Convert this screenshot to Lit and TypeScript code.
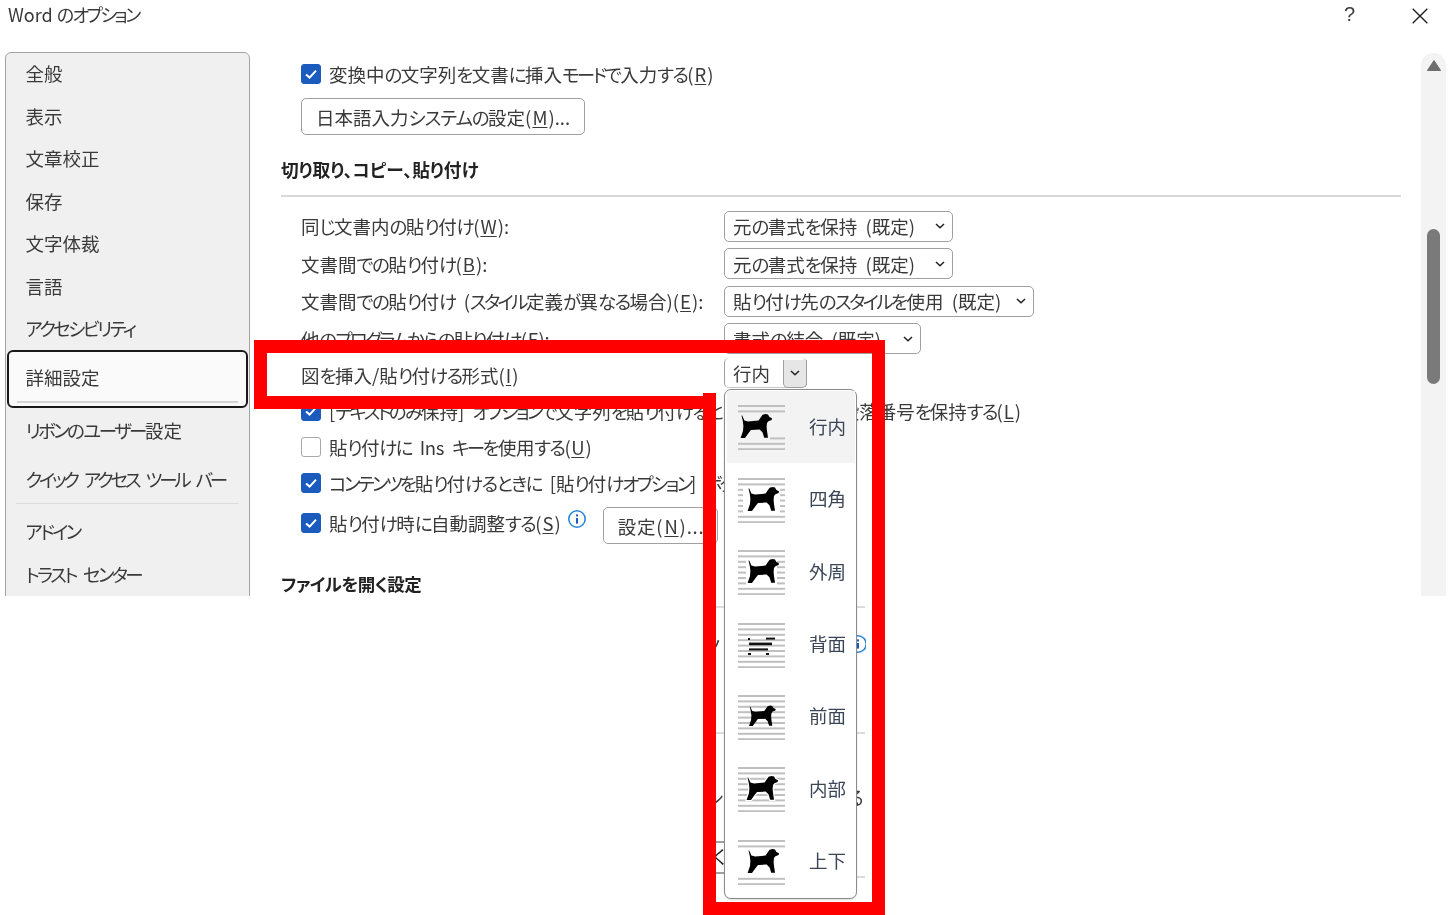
import { LitElement, html, css, svg } from "lit";
import { customElement } from "lit/decorators.js";

const DOG = "M1.5 1.5 L2.2 1.5 L4.4 6.5 L8 7.4 L18.6 6.6 L20.6 3.4 L22.6 .8 L25.5 0 L28 .6 L29.4 3 L32 4.2 L31.6 6 L28.4 7.2 L27 9 L26.6 13 L27 17 L28 23.8 L24.2 23.8 L22.6 18.4 L19.6 15.6 L11 16 L8.6 19 L5 24 L.6 24 L3 17 L3.4 12 L2.8 7 Z";

type Variant = "inline" | "square" | "tight" | "behind" | "front" | "through" | "topbottom";

function lines(ys: number[], x = 0, w = 47) {
  return ys.map((y) => svg`<rect x=${x} y=${y} width=${w} height="2" fill="#c0c0c0"></rect>`);
}
const YS = [0, 1, 2, 3, 4, 5, 6, 7, 8].map((i) => 1 + i * 5.4);
const MID = YS.slice(2, 7);

function dog(x: number, y: number, s = 1) {
  return svg`<path transform="translate(${x} ${y}) scale(${s})" d=${DOG} fill="#000"></path>`;
}

function icon(v: Variant) {
  let body;
  if (v === "inline") {
    body = svg`${lines([YS[0], YS[1], YS[7], YS[8]])}${lines([YS[6]], 32, 15)}${dog(2, 10)}`;
  } else if (v === "square") {
    body = svg`${lines([YS[0], YS[1], YS[7], YS[8]])}${lines(MID, 0, 5)}${lines(MID, 42, 5)}${dog(9, 10)}`;
  } else if (v === "tight") {
    body = svg`${lines([YS[0], YS[1], YS[7], YS[8]])}${lines(MID, 0, 8)}${lines(MID, 39, 8)}${dog(9, 10)}`;
  } else if (v === "behind") {
    body = svg`${lines(YS)}
      <rect x="10" y="16" width="2" height="2" fill="#111"></rect>
      <rect x="28" y="15.6" width="9" height="2" fill="#111"></rect>
      <rect x="11" y="20.6" width="23" height="2.6" fill="#111"></rect>
      <rect x="11" y="26.4" width="19" height="2" fill="#111"></rect>
      <rect x="10" y="31" width="3" height="2" fill="#111"></rect>
      <rect x="28" y="31" width="3" height="2" fill="#111"></rect>`;
  } else if (v === "front") {
    body = svg`${lines(YS)}${dog(10.5, 11.5, 0.85)}`;
  } else if (v === "through") {
    body = svg`${lines(YS)}
      <path transform="translate(8 10)" d=${DOG} fill="#000" stroke="#fff" stroke-width="2.4" paint-order="stroke"></path>`;
  } else {
    body = svg`${lines([YS[0], YS[1], YS[7], YS[8]])}${dog(9, 10)}`;
  }
  return html`<svg class="wrap-icon" viewBox="0 0 47 46" width="47" height="46">${body}</svg>`;
}

function chevron() {
  return html`<svg class="chev" viewBox="0 0 10 6" width="10" height="6"><path d="M1 1 L5 4.8 L9 1" fill="none" stroke="#222" stroke-width="1.5"></path></svg>`;
}

function check(on: boolean) {
  return on
    ? html`<span class="cb on"><svg viewBox="0 0 20 20" width="20" height="20"><path d="M5 10.4 L8.6 13.6 L15 6.6" fill="none" stroke="#fff" stroke-width="2"></path></svg></span>`
    : html`<span class="cb"></span>`;
}

/* Kana in the reference's UI face is much narrower than in Noto: tighten kana runs only. */
function t(s: string) {
  return s.split(/([\u3041-\u309f]+|[\u30a0-\u30ff]+)/).map((p) => {
    if (!p) return "";
    if (/^[\u3041-\u309f]/.test(p)) return html`<span class="hi">${p}</span>`;
    if (/^[\u30a0-\u30ff]/.test(p)) return html`<span class="ka">${p}</span>`;
    return p;
  });
}

@customElement("app-root")
export class AppRoot extends LitElement {
  static styles = css`
    :host {
      display: block;
      position: relative;
      width: 1453px;
      height: 915px;
      overflow: hidden;
      background: #fff;
      color: #3a3a3a;
      font-family: "Noto Sans CJK JP", "Noto Sans", sans-serif;
      font-size: 18.5px;
      font-feature-settings: "palt";
      line-height: 26px;
      word-spacing: 4px;
      filter: blur(0.3px);
    }
    .hi { letter-spacing: -1.6px; }
    .ka { letter-spacing: -2.6px; }
    u { text-underline-offset: 2px; text-decoration-thickness: 1px; margin: 0 1px; }
    .title {
      height: 52px;
      display: flex;
      align-items: flex-start;
      padding: 1px 0 0 8px;
      box-sizing: border-box;
      font-size: 18px;
      word-spacing: 0;
    }
    .title .name { flex: 1; }
    .title .help { width: 68px; padding-left: 2px; font-family: "Liberation Sans", sans-serif; font-size: 20px; }
    .title .close { margin: 7px 25px 0 0; }
    .body { display: flex; height: 544px; overflow: hidden; }
    .side {
      box-sizing: border-box;
      width: 245px;
      margin-left: 5px;
      height: 570px;
      border: 1.5px solid #a4a4a4;
      border-radius: 6px;
      background: #f0f0f0;
      display: flex;
      flex-direction: column;
      padding: 0 1px;
      flex: none;
      white-space: nowrap;
      word-spacing: 0;
    }
    .side .it { height: 42.5px; display: flex; align-items: center; padding-left: 18.5px; flex: none; }
    .side .it span { white-space: pre; }
    .side .it:first-child { margin-top: -1px; }
    .side .sel {
      height: 58px;
      box-sizing: border-box;
      border: 2px solid #1a1a1a;
      border-radius: 6px;
      background: #fafafa;
      padding: 0 0 4px 16.5px;
      position: relative;
    }
    .side .sel::after {
      content: "";
      position: absolute;
      left: 8px;
      right: 8px;
      bottom: 3px;
      height: 1.5px;
      background: #d4d4d4;
    }
    .side .ribbon { height: 44px; }
    .side .qat { height: 48px; margin-top: 3px; word-spacing: 3px; }
    .side .qat .ka { letter-spacing: -3.2px; }
    .side .trust { word-spacing: 3px; }
    .side .sep { height: 1.5px; background: #dcdcdc; margin: 0 9px 6px; flex: none; }
    .main {
      flex: none;
      width: 1120px;
      margin-left: 31px;
      display: flex;
      flex-direction: column;
      padding-top: 4px;
    }
    .row { display: flex; align-items: center; padding-left: 20px; flex: none; white-space: nowrap; }
    .r36 { height: 36px; }
    .r44 { height: 44px; }
    .r375 { height: 37.5px; }
    .r35 { height: 35px; }
    .rbtn { height: 43px; align-items: flex-end; }
    .tight { letter-spacing: -0.3px; }
    .tight2 { margin-right: 0; }
    .tight2 .ka, .tight2 .hi { margin-right: -0.5px; }
    .cb {
      box-sizing: border-box;
      flex: none;
      width: 20px;
      height: 20px;
      border: 1.5px solid #a8a8a8;
      border-radius: 3px;
      margin-right: 8px;
      background: #fff;
      display: flex;
      align-items: center;
      justify-content: center;
    }
    .cb.on { background: #1a5bbd; border-color: #1a5bbd; }
    .cb.on svg { flex: none; }
    .btn {
      box-sizing: border-box;
      height: 37px;
      border: 1.5px solid #a0a0a0;
      border-radius: 5px;
      display: inline-flex;
      align-items: center;
      padding: 0 14px;
      background: #fff;
      white-space: pre;
    }
    .btn-jp { width: 284px; }
    .btn-jp .ka { letter-spacing: -1px; }
    .btn-set { width: 115px; flex: none; margin-top: 6px; overflow: hidden; letter-spacing: 0.8px; }
    .head { font-weight: 700; color: #222; flex: none; }
    .h1 { font-size: 17.7px; height: 60px; padding-top: 21px; box-sizing: border-box; }
    .h2 { font-size: 17.5px; height: 34px; padding-top: 26px; letter-spacing: -0.5px; }
    .rule { height: 1.5px; background: #d8d8d8; width: 1120px; flex: none; }
    .gap { height: 11px; flex: none; }
    .label { width: 423px; flex: none; }
    .sel-box {
      box-sizing: border-box;
      height: 31px;
      border: 1.5px solid #a0a0a0;
      border-radius: 5px;
      display: flex;
      align-items: center;
      justify-content: space-between;
      padding: 0 7px 0 8px;
      background: #fff;
      flex: none;
    }
    .w1 { width: 229px; }
    .w2 { width: 310px; }
    .w3 { width: 197px; }
    .w4 {
      width: 83px;
      height: 30px;
      padding: 2px 0 0 8px;
      align-self: flex-start;
      border-top: none;
      border-bottom-color: #c8c8c8;
    }
    .drop {
      box-sizing: border-box;
      width: 24px;
      height: 28px;
      border: 1.5px solid #a0a0a0;
      border-top: none;
      border-radius: 0 0 5px 5px;
      background: #e6e6e6;
      display: flex;
      align-items: center;
      justify-content: center;
      margin: 0 -0.5px -1.5px 0;
    }
    .info { flex: none; margin: -8px 16px 0 6px; display: block; height: 20px; }
    .info svg { display: block; }
    .scroll {
      flex: none;
      width: 25px;
      margin: 1px 0 0 20px;
      height: 560px;
      background: #f3f3f3;
      border-radius: 13px 13px 0 0;
      position: relative;
    }
    .up { display: block; margin: 7px auto 0; }
    .thumb {
      width: 13px;
      height: 155px;
      margin: 158px auto 0;
      background: #7a7a7a;
      border-radius: 7px;
    }
    .popup {
      position: absolute;
      left: 724px;
      top: 389px;
      width: 133px;
      height: 510px;
      box-sizing: border-box;
      border: 1.5px solid #8c8c8c;
      border-radius: 7px;
      background: #fff;
      padding: 1px 1.5px;
      display: flex;
      flex-direction: column;
      box-shadow: 0 1px 2px rgba(0, 0, 0, .15);
    }
    .opt {
      height: 72.45px;
      flex: none;
      display: flex;
      align-items: center;
      padding-left: 11.5px;
      gap: 24px;
      color: #3a4656;
    }
    .opt span { margin-bottom: 3px; }
    .opt.on { background: #f3f3f3; }
    .wrap-icon { flex: none; }
    .frame { position: absolute; left: 0; top: 0; }
    .bit { position: absolute; overflow: hidden; }
    .bit svg { display: block; margin-left: -9px; }
    .bit.ln { height: 1.5px; background: #dcdcdc; }
    .bit.dk { background: #a0a0a0; }
    .bit.tx { white-space: nowrap; }
    .bit.tx span { display: inline-block; margin-left: -10px; }
    .bit.tx span.kk { margin-left: -3px; color: #222; }
  `;

  private bitPos(l: number, tp: number, w: number, h?: number) {
    return `left:${l}px;top:${tp}px;width:${w}px${h ? `;height:${h}px` : ""}`;
  }

  render() {
    const side = ["全般", "表示", "文章校正", "保存", "文字体裁", "言語", "アクセシビリティ"];
    const opts: [string, Variant][] = [
      ["行内", "inline"],
      ["四角", "square"],
      ["外周", "tight"],
      ["背面", "behind"],
      ["前面", "front"],
      ["内部", "through"],
      ["上下", "topbottom"],
    ];
    const p = this.bitPos;
    const info = html`<svg viewBox="0 0 20 20" width="20" height="20"><circle cx="10" cy="10" r="8.2" fill="none" stroke="#2b88d8" stroke-width="1.6"></circle><rect x="9" y="9" width="2" height="5.6" fill="#1a5bbd"></rect><rect x="9" y="5.4" width="2" height="2" fill="#1a5bbd"></rect></svg>`;
    return html`
      <div class="title">
        <span class="name">Word ${t("のオプション")}</span>
        <span class="help">?</span>
        <svg class="close" viewBox="0 0 16 16" width="16" height="16"><path d="M.7 .7 L15.3 15.3 M15.3 .7 L.7 15.3" stroke="#222" stroke-width="1.4" fill="none"></path></svg>
      </div>
      <div class="body">
        <nav class="side">
          ${side.map((s) => html`<div class="it"><span>${t(s)}</span></div>`)}
          <div class="it sel"><span>詳細設定</span></div>
          <div class="it ribbon"><span>${t("リボンのユーザー設定")}</span></div>
          <div class="it qat"><span>${t("クイック アクセス ツール バー")}</span></div>
          <div class="sep"></div>
          <div class="it"><span>${t("アドイン")}</span></div>
          <div class="it trust"><span>${t("トラスト センター")}</span></div>
        </nav>
        <section class="main">
          <div class="row r36">${check(true)}<span>${t("変換中の文字列を文書に挿入モードで入力する")}(<u>R</u>)</span></div>
          <div class="row rbtn"><span class="btn btn-jp">${t("日本語入力システムの設定")}(<u>M</u>)...</span></div>
          <div class="head h1">切り取り、コピー、貼り付け</div>
          <div class="rule"></div>
          <div class="gap"></div>
          <div class="row r375"><span class="label">${t("同じ文書内の貼り付け")}(<u>W</u>):</span><span class="sel-box w1"><span>${t("元の書式を保持 (既定)")}</span>${chevron()}</span></div>
          <div class="row r375"><span class="label">${t("文書間での貼り付け")}(<u>B</u>):</span><span class="sel-box w1"><span>${t("元の書式を保持 (既定)")}</span>${chevron()}</span></div>
          <div class="row r375"><span class="label">${t("文書間での貼り付け (スタイル定義が異なる場合)")}(<u>E</u>):</span><span class="sel-box w2"><span>${t("貼り付け先のスタイルを使用 (既定)")}</span>${chevron()}</span></div>
          <div class="row r375"><span class="label tight">${t("他のプログラムからの貼り付け")}(<u>F</u>):</span><span class="sel-box w3"><span>${t("書式の結合 (既定)")}</span>${chevron()}</span></div>
          <div class="row r35"><span class="label">${t("図を挿入/貼り付ける形式")}(<u>I</u>)</span><span class="sel-box w4"><span>行内</span><span class="drop">${chevron()}</span></span></div>
          <div class="row r36">${check(true)}<span class="tight2">${t("[テキストのみ保持] オプションで文字列を貼り付けるときに行頭文字と段落番号を保持する")}(<u>L</u>)</span></div>
          <div class="row r36">${check(false)}<span class="tight">${t("貼り付けに Ins キーを使用する")}(<u>U</u>)</span></div>
          <div class="row r36">${check(true)}<span class="tight2">${t("コンテンツを貼り付けるときに [貼り付けオプション] ボタンを表示する")}(<u>H</u>)</span></div>
          <div class="row r44">${check(true)}<span>${t("貼り付け時に自動調整する")}(<u>S</u>)</span>
            <span class="info">${info}</span>
            <span class="btn btn-set">設定(<u>N</u>)...</span></div>
          <div class="head h2">ファイルを開く設定</div>
        </section>
        <div class="scroll">
          <svg class="up" viewBox="0 0 14 11" width="14" height="11"><path d="M7 .5 L13.6 10.5 H.4 Z" fill="#6e6e6e" stroke="#6e6e6e" stroke-linejoin="round"></path></svg>
          <div class="thumb"></div>
        </div>
      </div>

      <div class="bit ln" style=${p(716, 606, 8)}></div>
      <div class="bit ln" style=${p(857, 606, 8)}></div>
      <div class="bit ln" style=${p(716, 732, 8)}></div>
      <div class="bit ln" style=${p(857, 732, 8)}></div>
      <div class="bit ln" style=${p(857, 876, 8)}></div>
      <div class="bit ln dk" style=${p(716, 841, 8)}></div>
      <div class="bit ln dk" style=${p(716, 872, 8)}></div>
      <div class="bit tx" style=${p(716, 633, 8, 26)}><span>ノ</span></div>
      <div class="bit tx" style=${p(716, 784, 8, 26)}><span>シ</span></div>
      <div class="bit tx" style=${p(716, 843, 8, 26)}><span class="kk">く</span></div>
      <div class="bit tx" style=${p(857, 784, 9, 26)}><span>る</span></div>
      <div class="bit" style=${p(857, 634, 9, 20)}>${info}</div>

      <div class="popup">
        ${opts.map(([s, v], i) => html`<div class="opt ${i === 0 ? "on" : ""}">${icon(v)}<span>${s}</span></div>`)}
      </div>

      <svg class="frame" width="1453" height="915" viewBox="0 0 1453 915">
        <path fill="#ff0000" fill-rule="evenodd" d="M254 340 H885 V915 H703 V409 H254 Z M267 353 V396 H703 V393 H716 V902 H872 V353 Z"></path>
      </svg>
    `;
  }
}
